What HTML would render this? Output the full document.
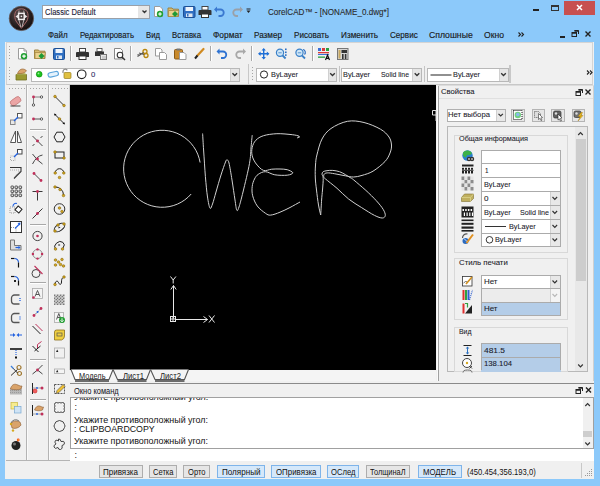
<!DOCTYPE html><html><head><meta charset="utf-8"><style>html,body{margin:0;padding:0;width:600px;height:486px;overflow:hidden}body>*{position:absolute}</style></head><body><div style="left:0px;top:0px;width:600px;height:486px;background:#8cc9fa"></div><div style="left:42px;top:5px;width:108px;height:14px;background:#fff;border:1px solid #9aa0a8;box-sizing:border-box"></div><div style="left:138px;top:6px;width:11px;height:12px;background:#e6e6e6"></div><div style="left:45px;top:7.87px;font-family:'Liberation Sans',sans-serif;font-size:8.4px;line-height:9.66px;color:#1d1d3a;white-space:pre;transform:scaleX(0.9041);transform-origin:0 0;-webkit-text-stroke:0.12px #1d1d3a;">Classic Default</div><div style="left:267.5px;top:7.46px;font-family:'Liberation Sans',sans-serif;font-size:8.8px;line-height:10.12px;color:#2a2a2a;white-space:pre;transform:scaleX(0.9202);transform-origin:0 0;-webkit-text-stroke:0.1px #2a2a2a;">CorelCAD™ - [NONAME_0.dwg*]</div><div style="left:564px;top:1px;width:31px;height:14px;background:#c75050"></div><div style="left:533px;top:9px;width:6px;height:2px;background:#222"></div><div style="left:551px;top:5px;width:8px;height:6px;border:1px solid #333;border-top-width:2px;box-sizing:border-box"></div><div style="left:48px;top:31.07px;font-family:'Liberation Sans',sans-serif;font-size:8.5px;line-height:9.77px;color:#1a1a1a;white-space:pre;transform:scaleX(0.9375);transform-origin:0 0;-webkit-text-stroke:0.15px #1a1a1a;">Файл</div><div style="left:80px;top:31.07px;font-family:'Liberation Sans',sans-serif;font-size:8.5px;line-height:9.77px;color:#1a1a1a;white-space:pre;transform:scaleX(0.9196);transform-origin:0 0;-webkit-text-stroke:0.15px #1a1a1a;">Редактировать</div><div style="left:146px;top:31.07px;font-family:'Liberation Sans',sans-serif;font-size:8.5px;line-height:9.77px;color:#1a1a1a;white-space:pre;transform:scaleX(0.9096);transform-origin:0 0;-webkit-text-stroke:0.15px #1a1a1a;">Вид</div><div style="left:172px;top:31.07px;font-family:'Liberation Sans',sans-serif;font-size:8.5px;line-height:9.77px;color:#1a1a1a;white-space:pre;transform:scaleX(0.9179);transform-origin:0 0;-webkit-text-stroke:0.15px #1a1a1a;">Вставка</div><div style="left:213px;top:31.07px;font-family:'Liberation Sans',sans-serif;font-size:8.5px;line-height:9.77px;color:#1a1a1a;white-space:pre;transform:scaleX(0.9833);transform-origin:0 0;-webkit-text-stroke:0.15px #1a1a1a;">Формат</div><div style="left:254px;top:31.07px;font-family:'Liberation Sans',sans-serif;font-size:8.5px;line-height:9.77px;color:#1a1a1a;white-space:pre;transform:scaleX(0.9583);transform-origin:0 0;-webkit-text-stroke:0.15px #1a1a1a;">Размер</div><div style="left:294px;top:31.07px;font-family:'Liberation Sans',sans-serif;font-size:8.5px;line-height:9.77px;color:#1a1a1a;white-space:pre;transform:scaleX(0.9516);transform-origin:0 0;-webkit-text-stroke:0.15px #1a1a1a;">Рисовать</div><div style="left:341px;top:31.07px;font-family:'Liberation Sans',sans-serif;font-size:8.5px;line-height:9.77px;color:#1a1a1a;white-space:pre;transform:scaleX(0.9650);transform-origin:0 0;-webkit-text-stroke:0.15px #1a1a1a;">Изменить</div><div style="left:390px;top:31.07px;font-family:'Liberation Sans',sans-serif;font-size:8.5px;line-height:9.77px;color:#1a1a1a;white-space:pre;transform:scaleX(0.9516);transform-origin:0 0;-webkit-text-stroke:0.15px #1a1a1a;">Сервис</div><div style="left:429px;top:31.07px;font-family:'Liberation Sans',sans-serif;font-size:8.5px;line-height:9.77px;color:#1a1a1a;white-space:pre;transform:scaleX(1.0192);transform-origin:0 0;-webkit-text-stroke:0.15px #1a1a1a;">Сплошные</div><div style="left:484px;top:31.07px;font-family:'Liberation Sans',sans-serif;font-size:8.5px;line-height:9.77px;color:#1a1a1a;white-space:pre;transform:scaleX(1.0119);transform-origin:0 0;-webkit-text-stroke:0.15px #1a1a1a;">Окно</div><div style="left:560px;top:36px;width:5px;height:2px;background:#222"></div><div style="left:5px;top:42px;width:589px;height:437px;background:#f0f0f0"></div><div style="left:6px;top:42px;width:587px;height:22px;background:#f0f0f0;border:1px solid #d4d4d4;border-bottom-color:#c8c8c8;box-sizing:border-box"></div><div style="left:6px;top:63px;width:587px;height:22px;background:#f0f0f0;border:1px solid #d4d4d4;border-top:none;border-bottom-color:#c8c8c8;box-sizing:border-box"></div><div style="left:248px;top:64px;width:1px;height:20px;background:#c8c8c8"></div><div style="left:509px;top:65px;width:2px;height:18px;background:#c8c8c8"></div><div style="left:338.5px;top:66px;width:1px;height:16px;background:#c4c4c4"></div><div style="left:424px;top:66px;width:1px;height:16px;background:#c4c4c4"></div><div style="left:31px;top:67.5px;width:209px;height:14.0px;background:#fff;border:1px solid #b8b8b8;box-sizing:border-box"></div><div style="left:229.5px;top:68.5px;width:9.5px;height:12.0px;background:#e6e6e6;border-left:1px solid #d0d0d0;box-sizing:border-box"></div><div style="left:256px;top:67.5px;width:81px;height:14.0px;background:#fff;border:1px solid #b8b8b8;box-sizing:border-box"></div><div style="left:328px;top:68.5px;width:8px;height:12.0px;background:#e6e6e6;border-left:1px solid #d0d0d0;box-sizing:border-box"></div><div style="left:341px;top:67.5px;width:81px;height:14.0px;background:#fff;border:1px solid #b8b8b8;box-sizing:border-box"></div><div style="left:412px;top:68.5px;width:9px;height:12.0px;background:#e6e6e6;border-left:1px solid #d0d0d0;box-sizing:border-box"></div><div style="left:427px;top:67.5px;width:81.5px;height:14.0px;background:#fff;border:1px solid #b8b8b8;box-sizing:border-box"></div><div style="left:498.5px;top:68.5px;width:9.0px;height:12.0px;background:#e6e6e6;border-left:1px solid #d0d0d0;box-sizing:border-box"></div><div style="left:91.3px;top:70.79px;font-family:'Liberation Sans',sans-serif;font-size:7.8px;line-height:8.97px;color:#2a2a60;white-space:pre;transform:scaleX(0.9899);transform-origin:0 0;-webkit-text-stroke:0.08px #2a2a60;">0</div><div style="left:271px;top:70.99px;font-family:'Liberation Sans',sans-serif;font-size:7.8px;line-height:8.97px;color:#1a1a2a;white-space:pre;transform:scaleX(0.9437);transform-origin:0 0;-webkit-text-stroke:0.08px #1a1a2a;">ByLayer</div><div style="left:343px;top:70.99px;font-family:'Liberation Sans',sans-serif;font-size:7.8px;line-height:8.97px;color:#1a1a2a;white-space:pre;transform:scaleX(0.9437);transform-origin:0 0;-webkit-text-stroke:0.08px #1a1a2a;">ByLayer</div><div style="left:381px;top:70.99px;font-family:'Liberation Sans',sans-serif;font-size:7.8px;line-height:8.97px;color:#1a1a2a;white-space:pre;transform:scaleX(0.8849);transform-origin:0 0;-webkit-text-stroke:0.08px #1a1a2a;">Solid line</div><div style="left:453px;top:70.99px;font-family:'Liberation Sans',sans-serif;font-size:7.8px;line-height:8.97px;color:#1a1a2a;white-space:pre;transform:scaleX(0.9437);transform-origin:0 0;-webkit-text-stroke:0.08px #1a1a2a;">ByLayer</div><div style="left:70px;top:85px;width:366px;height:285.5px;background:#000"></div><div style="left:436px;top:85px;width:3px;height:299px;background:#f0f0f0"></div><div style="left:438px;top:86px;width:156px;height:297px;border-left:1px solid #9a9a9a;box-sizing:border-box;background:#f0f0f0"></div><div style="left:438px;top:86px;width:156px;height:12px;background:#f0f0f0"></div><div style="left:440.5px;top:88.49px;font-family:'Liberation Sans',sans-serif;font-size:7.8px;line-height:8.97px;color:#1a1a2a;white-space:pre;transform:scaleX(0.9781);transform-origin:0 0;-webkit-text-stroke:0.08px #1a1a2a;">Свойства</div><div style="left:438px;top:98px;width:156px;height:1px;background:#e0e0e0"></div><div style="left:438px;top:85px;width:156px;height:1px;background:#dcdcdc"></div><div style="left:437px;top:86px;width:1px;height:296px;background:#fbfbfb"></div><div style="left:438px;top:86px;width:1px;height:296px;background:#a0a0a0"></div><div style="left:592.5px;top:86px;width:1px;height:296px;background:#d0d0d0"></div><div style="left:446.5px;top:108.5px;width:59.5px;height:13px;background:#fff;border:1px solid #b0b0b0;box-sizing:border-box"></div><div style="left:496px;top:109.5px;width:9px;height:11px;background:#e8e8e8;border-left:1px solid #d0d0d0;box-sizing:border-box"></div><div style="left:448px;top:111.49px;font-family:'Liberation Sans',sans-serif;font-size:7.8px;line-height:8.97px;color:#1a1a2a;white-space:pre;transform:scaleX(0.9819);transform-origin:0 0;-webkit-text-stroke:0.08px #1a1a2a;">Нет выбора</div><div style="left:511px;top:108.5px;width:13.5px;height:13px;background:#e6e6e6;border:1px solid #b4b4b4;box-sizing:border-box"></div><div style="left:531.5px;top:108.5px;width:13.5px;height:13px;background:#e6e6e6;border:1px solid #b4b4b4;box-sizing:border-box"></div><div style="left:551px;top:108.5px;width:13.5px;height:13px;background:#e6e6e6;border:1px solid #b4b4b4;box-sizing:border-box"></div><div style="left:571.5px;top:108.5px;width:13.5px;height:13px;background:#e6e6e6;border:1px solid #b4b4b4;box-sizing:border-box"></div><div style="left:446.5px;top:126px;width:141px;height:246px;background:#f0f0f0;border:1px solid #b8b8b8;box-sizing:border-box"></div><div style="left:575px;top:127px;width:11.5px;height:244px;background:#e8e8e8"></div><div style="left:576px;top:139px;width:10px;height:142px;background:#cdcdcd"></div><div style="left:453.5px;top:134.5px;width:114.5px;height:118.5px;border:1px solid #d8d8d8;box-sizing:border-box"></div><div style="left:459px;top:135.19px;font-family:'Liberation Sans',sans-serif;font-size:7.8px;line-height:8.97px;color:#1a1a2a;white-space:pre;transform:scaleX(0.9303);transform-origin:0 0;-webkit-text-stroke:0.08px #1a1a2a;">Общая информация</div><div style="left:453.5px;top:258px;width:114.5px;height:61.5px;border:1px solid #d8d8d8;box-sizing:border-box"></div><div style="left:459px;top:259.49px;font-family:'Liberation Sans',sans-serif;font-size:7.8px;line-height:8.97px;color:#1a1a2a;white-space:pre;-webkit-text-stroke:0.08px #1a1a2a;">Стиль печати</div><div style="left:453.5px;top:326.5px;width:114.5px;height:45.5px;border:1px solid #d8d8d8;box-sizing:border-box"></div><div style="left:459px;top:328.19px;font-family:'Liberation Sans',sans-serif;font-size:7.8px;line-height:8.97px;color:#1a1a2a;white-space:pre;transform:scaleX(0.8859);transform-origin:0 0;-webkit-text-stroke:0.08px #1a1a2a;">Вид</div><div style="left:481px;top:149.5px;width:80px;height:14.5px;background:#fff;border:1px solid #ababab;box-sizing:border-box"></div><div style="left:481px;top:163px;width:80px;height:14.5px;background:#fff;border:1px solid #ababab;box-sizing:border-box"></div><div style="left:485px;top:166.79px;font-family:'Liberation Sans',sans-serif;font-size:7.8px;line-height:8.97px;color:#1a1a2a;white-space:pre;transform:scaleX(0.8058);transform-origin:0 0;-webkit-text-stroke:0.08px #1a1a2a;">1</div><div style="left:481px;top:177px;width:80px;height:14.5px;background:#fff;border:1px solid #ababab;box-sizing:border-box"></div><div style="left:483.75px;top:180.79px;font-family:'Liberation Sans',sans-serif;font-size:7.8px;line-height:8.97px;color:#1a1a2a;white-space:pre;transform:scaleX(0.9350);transform-origin:0 0;-webkit-text-stroke:0.08px #1a1a2a;">ByLayer</div><div style="left:481px;top:191px;width:80px;height:14.5px;background:#fff;border:1px solid #ababab;box-sizing:border-box"></div><div style="left:549.5px;top:192px;width:10.5px;height:12.5px;background:#e8e8e8;border-left:1px solid #d0d0d0;box-sizing:border-box"></div><div style="left:483.5px;top:194.79px;font-family:'Liberation Sans',sans-serif;font-size:7.8px;line-height:8.97px;color:#1a1a2a;white-space:pre;transform:scaleX(1.0360);transform-origin:0 0;-webkit-text-stroke:0.08px #1a1a2a;">0</div><div style="left:481px;top:205px;width:80px;height:14.5px;background:#fff;border:1px solid #ababab;box-sizing:border-box"></div><div style="left:549.5px;top:206px;width:10.5px;height:12.5px;background:#e8e8e8;border-left:1px solid #d0d0d0;box-sizing:border-box"></div><div style="left:483.75px;top:208.79px;font-family:'Liberation Sans',sans-serif;font-size:7.8px;line-height:8.97px;color:#1a1a2a;white-space:pre;transform:scaleX(0.9350);transform-origin:0 0;-webkit-text-stroke:0.08px #1a1a2a;">ByLayer</div><div style="left:519.5px;top:208.79px;font-family:'Liberation Sans',sans-serif;font-size:7.8px;line-height:8.97px;color:#1a1a2a;white-space:pre;transform:scaleX(0.9165);transform-origin:0 0;-webkit-text-stroke:0.08px #1a1a2a;">Solid line</div><div style="left:481px;top:219px;width:80px;height:14.5px;background:#fff;border:1px solid #ababab;box-sizing:border-box"></div><div style="left:549.5px;top:220px;width:10.5px;height:12.5px;background:#e8e8e8;border-left:1px solid #d0d0d0;box-sizing:border-box"></div><div style="left:508.5px;top:222.79px;font-family:'Liberation Sans',sans-serif;font-size:7.8px;line-height:8.97px;color:#1a1a2a;white-space:pre;transform:scaleX(0.9350);transform-origin:0 0;-webkit-text-stroke:0.08px #1a1a2a;">ByLayer</div><div style="left:481px;top:232.5px;width:80px;height:14.5px;background:#fff;border:1px solid #ababab;box-sizing:border-box"></div><div style="left:549.5px;top:233.5px;width:10.5px;height:12.5px;background:#e8e8e8;border-left:1px solid #d0d0d0;box-sizing:border-box"></div><div style="left:495px;top:236.29px;font-family:'Liberation Sans',sans-serif;font-size:7.8px;line-height:8.97px;color:#1a1a2a;white-space:pre;transform:scaleX(0.9350);transform-origin:0 0;-webkit-text-stroke:0.08px #1a1a2a;">ByLayer</div><div style="left:481px;top:274.5px;width:80px;height:14.5px;background:#fff;border:1px solid #ababab;box-sizing:border-box"></div><div style="left:549.5px;top:275.5px;width:10.5px;height:12.5px;background:#e8e8e8;border-left:1px solid #d0d0d0;box-sizing:border-box"></div><div style="left:483.5px;top:278.29px;font-family:'Liberation Sans',sans-serif;font-size:7.8px;line-height:8.97px;color:#1a1a2a;white-space:pre;transform:scaleX(1.0165);transform-origin:0 0;-webkit-text-stroke:0.08px #1a1a2a;">Нет</div><div style="left:481px;top:288px;width:80px;height:14.5px;background:#ececec;border:1px solid #ababab;box-sizing:border-box"></div><div style="left:549.5px;top:289px;width:10.5px;height:12.5px;background:#f4f4f4;border-left:1px solid #d0d0d0;box-sizing:border-box"></div><div style="left:481px;top:301.5px;width:80px;height:14.5px;background:#b4cde8;border:1px solid #ababab;box-sizing:border-box"></div><div style="left:483.5px;top:305.29px;font-family:'Liberation Sans',sans-serif;font-size:7.8px;line-height:8.97px;color:#1a1a2a;white-space:pre;transform:scaleX(1.0165);transform-origin:0 0;-webkit-text-stroke:0.08px #1a1a2a;">Нет</div><div style="left:481px;top:343px;width:80px;height:14.5px;background:#b4cde8;border:1px solid #ababab;box-sizing:border-box"></div><div style="left:484px;top:346.79px;font-family:'Liberation Sans',sans-serif;font-size:7.8px;line-height:8.97px;color:#1a1a2a;white-space:pre;transform:scaleX(1.0761);transform-origin:0 0;-webkit-text-stroke:0.08px #1a1a2a;">481.5</div><div style="left:481px;top:356.5px;width:80px;height:14.5px;background:#b4cde8;border:1px solid #ababab;box-sizing:border-box"></div><div style="left:484px;top:360.29px;font-family:'Liberation Sans',sans-serif;font-size:7.8px;line-height:8.97px;color:#1a1a2a;white-space:pre;transform:scaleX(0.9933);transform-origin:0 0;-webkit-text-stroke:0.08px #1a1a2a;">138.104</div><div style="left:481px;top:370px;width:80px;height:2px;background:#b4cde8"></div><div style="left:438px;top:382px;width:156px;height:1.5px;background:#9a9a9a"></div><div style="left:70px;top:369.5px;width:366px;height:11px;background:#f4f4f4"></div><div style="left:70px;top:380.5px;width:366px;height:1px;background:#7a7a7a"></div><div style="left:70px;top:381px;width:524px;height:2px;background:#f0f0f0"></div><svg style="left:0;top:0" width="600" height="486"><path d="M71 369.5 L75 379.5 H109 L113 369.5" fill="#fff" stroke="#555" stroke-width="1.1"/><path d="M113 369.5 L117.5 379.5 H146.5 L150.5 369.5" fill="#f4f4f4" stroke="#555" stroke-width="1.1"/><path d="M150.5 369.5 L155 379.5 H184.5 L188.5 369.5" fill="#f4f4f4" stroke="#555" stroke-width="1.1"/></svg><div style="left:78.5px;top:371.86px;font-family:'Liberation Sans',sans-serif;font-size:8.2px;line-height:9.43px;color:#222;white-space:pre;transform:scaleX(0.9016);transform-origin:0 0;">Модель</div><div style="left:122.5px;top:371.86px;font-family:'Liberation Sans',sans-serif;font-size:8.2px;line-height:9.43px;color:#222;white-space:pre;transform:scaleX(0.9399);transform-origin:0 0;">Лист1</div><div style="left:160px;top:371.86px;font-family:'Liberation Sans',sans-serif;font-size:8.2px;line-height:9.43px;color:#222;white-space:pre;transform:scaleX(0.9399);transform-origin:0 0;">Лист2</div><div style="left:70px;top:382.5px;width:524px;height:1px;background:#8a8a8a"></div><div style="left:70px;top:383.5px;width:524px;height:13px;background:#f0f0f0"></div><div style="left:70px;top:396.5px;width:524px;height:1px;background:#a0a0a0"></div><div style="left:73.5px;top:387.26px;font-family:'Liberation Sans',sans-serif;font-size:8.2px;line-height:9.43px;color:#1a1a2a;white-space:pre;transform:scaleX(0.9120);transform-origin:0 0;-webkit-text-stroke:0.05px #111;">Окно команд</div><div style="left:70px;top:397.5px;width:524px;height:51px;background:#fff;border-left:1px solid #a0a0a0;border-right:1px solid #a0a0a0;border-bottom:1px solid #a0a0a0;box-sizing:border-box;overflow:hidden"></div><div style="left:71px;top:397.5px;width:510px;height:50px;overflow:hidden"><div style="position:absolute;left:3px;top:-6px;font-family:'Liberation Sans',sans-serif;font-size:9px;line-height:10px;color:#111;white-space:pre;transform:scaleX(0.99);transform-origin:0 0">Укажите противоположный угол:</div></div><div style="left:74.5px;top:401.76px;font-family:'Liberation Sans',sans-serif;font-size:9px;line-height:10.35px;color:#111;white-space:pre;">:</div><div style="left:74px;top:414.56px;font-family:'Liberation Sans',sans-serif;font-size:9px;line-height:10.35px;color:#111;white-space:pre;transform:scaleX(0.9880);transform-origin:0 0;">Укажите противоположный угол:</div><div style="left:74px;top:424.36px;font-family:'Liberation Sans',sans-serif;font-size:9px;line-height:10.35px;color:#111;white-space:pre;transform:scaleX(0.9778);transform-origin:0 0;">: CLIPBOARDCOPY</div><div style="left:74px;top:435.86px;font-family:'Liberation Sans',sans-serif;font-size:9px;line-height:10.35px;color:#111;white-space:pre;transform:scaleX(0.9880);transform-origin:0 0;">Укажите противоположный угол:</div><div style="left:582.5px;top:398px;width:10px;height:50px;background:#f0f0f0"></div><div style="left:583px;top:431px;width:9px;height:6px;background:#cdcdcd"></div><div style="left:70px;top:448.5px;width:524px;height:12.5px;background:#fff"></div><div style="left:74.5px;top:449.56px;font-family:'Liberation Sans',sans-serif;font-size:9px;line-height:10.35px;color:#111;white-space:pre;">:</div><div style="left:5px;top:461px;width:589px;height:18px;background:#f0f0f0"></div><div style="left:99px;top:465px;width:43.599999999999994px;height:13px;background:#e6e6e6;border:1px solid #adadad;box-sizing:border-box"></div><div style="left:103.3px;top:467.56px;font-family:'Liberation Sans',sans-serif;font-size:8.3px;line-height:9.54px;color:#111;white-space:pre;transform:scaleX(0.9651);transform-origin:0 0;">Привязка</div><div style="left:148.6px;top:465px;width:28.400000000000006px;height:13px;background:#e6e6e6;border:1px solid #adadad;box-sizing:border-box"></div><div style="left:152.55px;top:467.56px;font-family:'Liberation Sans',sans-serif;font-size:8.3px;line-height:9.54px;color:#111;white-space:pre;transform:scaleX(0.9086);transform-origin:0 0;">Сетка</div><div style="left:183px;top:465px;width:27px;height:13px;background:#e6e6e6;border:1px solid #adadad;box-sizing:border-box"></div><div style="left:187.75px;top:467.56px;font-family:'Liberation Sans',sans-serif;font-size:8.3px;line-height:9.54px;color:#111;white-space:pre;transform:scaleX(0.9106);transform-origin:0 0;">Орто</div><div style="left:216.7px;top:465px;width:48.30000000000001px;height:13px;background:#d5e8fa;border:1px solid #7eb4ea;box-sizing:border-box"></div><div style="left:221.6px;top:467.56px;font-family:'Liberation Sans',sans-serif;font-size:8.3px;line-height:9.54px;color:#111;white-space:pre;transform:scaleX(0.9739);transform-origin:0 0;">Полярный</div><div style="left:271px;top:465px;width:49.69999999999999px;height:13px;background:#d5e8fa;border:1px solid #7eb4ea;box-sizing:border-box"></div><div style="left:275.6px;top:467.56px;font-family:'Liberation Sans',sans-serif;font-size:8.3px;line-height:9.54px;color:#111;white-space:pre;transform:scaleX(0.9481);transform-origin:0 0;">ОПривязка</div><div style="left:326.7px;top:465px;width:32.60000000000002px;height:13px;background:#d5e8fa;border:1px solid #7eb4ea;box-sizing:border-box"></div><div style="left:330.75px;top:467.56px;font-family:'Liberation Sans',sans-serif;font-size:8.3px;line-height:9.54px;color:#111;white-space:pre;transform:scaleX(0.9224);transform-origin:0 0;">ОСлед</div><div style="left:365.8px;top:465px;width:44.599999999999966px;height:13px;background:#e6e6e6;border:1px solid #adadad;box-sizing:border-box"></div><div style="left:370.35px;top:467.56px;font-family:'Liberation Sans',sans-serif;font-size:8.3px;line-height:9.54px;color:#111;white-space:pre;transform:scaleX(0.8920);transform-origin:0 0;">ТолщинаЛ</div><div style="left:418px;top:465px;width:43.69999999999999px;height:13px;background:#d5e8fa;border:1px solid #7eb4ea;box-sizing:border-box"></div><div style="left:423.35px;top:467.56px;font-family:'Liberation Sans',sans-serif;font-size:8.3px;line-height:9.54px;color:#111;white-space:pre;transform:scaleX(0.9366);transform-origin:0 0;">МОДЕЛЬ</div><div style="left:466.7px;top:467.56px;font-family:'Liberation Sans',sans-serif;font-size:8.3px;line-height:9.54px;color:#111;white-space:pre;transform:scaleX(0.9193);transform-origin:0 0;">(450.454,356.193,0)</div><div style="left:581px;top:463px;width:1px;height:15px;background:#c8c8c8"></div><svg style="left:0;top:0" width="600" height="486" viewBox="0 0 600 486"><defs><radialGradient id="lg" cx="40%" cy="35%" r="65%"><stop offset="0" stop-color="#5a4c4c"/><stop offset="0.6" stop-color="#2c2424"/><stop offset="1" stop-color="#161010"/></radialGradient></defs><circle cx="21.4" cy="18.4" r="12.2" fill="url(#lg)" stroke="#6a5c5c" stroke-width="0.8"/><path d="M21.4 8.8 C13.8 8.8 13.8 17 16 21 L21.4 28.3 L26.8 21 C29 17 29 8.8 21.4 8.8Z" fill="none" stroke="#a86a6a" stroke-width="1"/><path d="M19 10.5 Q17.5 19 20.8 27 M23.8 10.5 Q25.3 19 22 27" fill="none" stroke="#c8c0c0" stroke-width="0.9"/><path d="M15.5 16.5 L17.5 15 H25.3 L27.3 16.5 L25.3 18 H17.5Z" fill="#e8e4e4"/><rect x="18.6" y="13.4" width="5.6" height="6" fill="#3a3030" stroke="#f0ecec" stroke-width="1.5"/><rect x="20.6" y="15.6" width="1.6" height="1.6" fill="#f0ecec"/><path d="M154.5 6.5h5.5l2.5 2.5v7.5h-8z" fill="#fff" stroke="#9c9c9c"/><circle cx="160" cy="14" r="3.2" fill="#22a033"/><path d="M158.2 14h3.6M160 12.2v3.6" stroke="#fff" stroke-width="1.2"/><path d="M168 8h4l1 1.2h5.5v7.3h-10.5z" fill="#d8bb6e" stroke="#9d8240"/><path d="M168.5 10.5h10.5l-1.5 6h-9z" fill="#e9d18e" stroke="#a88a45" stroke-width="0.8"/><path d="M175 11l3 3-3 3-3-3z" fill="#1f9a35"/><rect x="183.5" y="6.5" width="11.5" height="11" rx="1" fill="#2f6fc2" stroke="#1d4f94"/><rect x="185.5" y="7" width="7.5" height="4" fill="#eef4fb"/><rect x="186" y="13.5" width="6.5" height="3.5" fill="#dde6f0"/><rect x="187" y="14" width="1.5" height="2.5" fill="#2f6fc2"/><rect x="202" y="6.5" width="6" height="3.5" fill="#fff" stroke="#444"/><path d="M199.5 10h11a1 1 0 0 1 1 1v4h-13v-4a1 1 0 0 1 1-1z" fill="#333"/><rect x="201.5" y="14" width="7" height="3.5" fill="#fff" stroke="#333"/><path d="M216 9.5h4.5a3 3 0 0 1 0 6.5h-2" fill="none" stroke="#3a78d0" stroke-width="1.8"/><path d="M214 9.5l3-3v6z" fill="#3a78d0"/><path d="M241 9.5h-4.5a3 3 0 0 0 0 6.5h1.5" fill="none" stroke="#9aa0a8" stroke-width="1.8"/><path d="M243 9.5l-3-3v6z" fill="#9aa0a8"/><rect x="246.5" y="8.5" width="4" height="1" fill="#222"/><path d="M246.5 10.5h4l-2 2.5z" fill="#222"/><path d="M142.5 10.5 L144.5 12.5 L146.5 10.5" fill="none" stroke="#333" stroke-width="1.3"/><path d="M577 5 L582 10 M582 5 L577 10" stroke="#fff" stroke-width="1.5"/><path d="M518.5 32.5l2 2-2 2M521.5 32.5l2 2-2 2" fill="none" stroke="#222" stroke-width="1.1"/><path d="M574.5 30.5h4v3.5" fill="none" stroke="#222" stroke-width="1"/><rect x="572" y="32.5" width="4.5" height="4" fill="none" stroke="#222" stroke-width="1"/><path d="M572 33h4.5M574.5 31h4" stroke="#222" stroke-width="1.5"/><path d="M585.5 31.5 L590.5 36.5 M590.5 31.5 L585.5 36.5" stroke="#222" stroke-width="1.4"/><rect x="9" y="46" width="1" height="1" fill="#a4a4a4"/><rect x="9" y="49" width="1" height="1" fill="#a4a4a4"/><rect x="9" y="52" width="1" height="1" fill="#a4a4a4"/><rect x="9" y="55" width="1" height="1" fill="#a4a4a4"/><rect x="9" y="58" width="1" height="1" fill="#a4a4a4"/><rect x="9" y="67" width="1" height="1" fill="#a4a4a4"/><rect x="9" y="70" width="1" height="1" fill="#a4a4a4"/><rect x="9" y="73" width="1" height="1" fill="#a4a4a4"/><rect x="9" y="76" width="1" height="1" fill="#a4a4a4"/><rect x="9" y="79" width="1" height="1" fill="#a4a4a4"/><rect x="252" y="67" width="1" height="1" fill="#a4a4a4"/><rect x="252" y="70" width="1" height="1" fill="#a4a4a4"/><rect x="252" y="73" width="1" height="1" fill="#a4a4a4"/><rect x="252" y="76" width="1" height="1" fill="#a4a4a4"/><rect x="252" y="79" width="1" height="1" fill="#a4a4a4"/><rect x="70" y="46" width="1" height="15" fill="#a8a8a8"/><rect x="71" y="46" width="1" height="15" fill="#ffffff"/><rect x="130" y="46" width="1" height="15" fill="#a8a8a8"/><rect x="131" y="46" width="1" height="15" fill="#ffffff"/><rect x="210" y="46" width="1" height="15" fill="#a8a8a8"/><rect x="211" y="46" width="1" height="15" fill="#ffffff"/><rect x="251" y="46" width="1" height="15" fill="#a8a8a8"/><rect x="252" y="46" width="1" height="15" fill="#ffffff"/><rect x="312" y="46" width="1" height="15" fill="#a8a8a8"/><rect x="313" y="46" width="1" height="15" fill="#ffffff"/><path d="M18.5 48.5h5.5l2.5 2.5v8h-8z" fill="#fff" stroke="#9c9c9c"/><path d="M24 48.5v2.5h2.5" fill="none" stroke="#9c9c9c"/><circle cx="24" cy="56.2" r="3.2" fill="#22a033"/><path d="M22.2 56.2h3.6M24 54.4v3.6" stroke="#fff" stroke-width="1.2"/><path d="M34.5 50h4l1 1.2h5.5v7.3h-10.5z" fill="#d8bb6e" stroke="#9d8240"/><path d="M35 52.5h10.5l-1.5 6h-9z" fill="#e9d18e" stroke="#a88a45" stroke-width="0.8"/><path d="M41.5 53l3 3-3 3-3-3z" fill="#1f9a35"/><rect x="53.5" y="48.5" width="11" height="11" rx="1" fill="#2f6fc2" stroke="#1d4f94"/><rect x="55.5" y="49" width="7" height="4" fill="#eef4fb"/><rect x="56" y="55.5" width="6" height="3.5" fill="#dde6f0"/><rect x="57" y="56" width="1.5" height="2.5" fill="#2f6fc2"/><rect x="79.5" y="48.5" width="6" height="3.5" fill="#fff" stroke="#444"/><path d="M77 52h11a1 1 0 0 1 1 1v4h-13v-4a1 1 0 0 1 1-1z" fill="#333"/><rect x="79" y="56" width="7" height="3.5" fill="#fff" stroke="#333"/><rect x="97" y="48.5" width="5" height="3" fill="#fff" stroke="#444" stroke-width="0.8"/><path d="M95 51.5h9v4.5h-9z" fill="#333"/><rect x="100.5" y="54.5" width="6" height="5" fill="#e8e8e8" stroke="#777"/><rect x="102" y="56" width="4" height="3" fill="#ccc"/><path d="M114.5 48.5h6l2 2v8.5h-8z" fill="#fff" stroke="#888"/><circle cx="120" cy="55" r="2.8" fill="#fff" stroke="#333" stroke-width="1.1"/><path d="M122 57l3 3" stroke="#333" stroke-width="1.5"/><circle cx="145" cy="51.5" r="2" fill="none" stroke="#b8860b" stroke-width="1.3"/><circle cx="146" cy="55.5" r="2" fill="none" stroke="#b8860b" stroke-width="1.3"/><path d="M143.5 52.5L137.5 56.5M144 54.5L139 53" stroke="#555" stroke-width="1.1"/><path d="M137 55l3-1" stroke="#888" stroke-width="1"/><path d="M155.5 48.5h5l1.5 1.5v6h-6.5z" fill="#fff" stroke="#9a9a9a"/><path d="M159.5 52.5h5l2 2v5h-7z" fill="#fff" stroke="#9a9a9a"/><rect x="174.5" y="49.5" width="8" height="9.5" rx="1" fill="#c8892b" stroke="#8a5a18"/><rect x="176.5" y="48.5" width="4" height="2" fill="#777"/><path d="M179.5 52.5h4.5l2 2v5h-6.5z" fill="#fff" stroke="#999"/><path d="M203.5 49L197.5 55.5" stroke="#d08a20" stroke-width="2.2" stroke-linecap="round"/><path d="M197.5 55.5L195 58.5" stroke="#222" stroke-width="2"/><path d="M218.5 51.5h4.5a3 3 0 0 1 0 6.5h-2" fill="none" stroke="#2d72d2" stroke-width="1.8"/><path d="M216.5 51.5l3-3v6z" fill="#2d72d2"/><path d="M244 51.5h-4.5a3 3 0 0 0 0 6.5h1.5" fill="none" stroke="#a8a8a8" stroke-width="1.8"/><path d="M246 51.5l-3-3v6z" fill="#a8a8a8"/><path d="M263.7 49.2v9.2M259 53.8h9.4" stroke="#1f6fd6" stroke-width="1.4"/><path d="M263.7 48l-2.2 2.6h4.4zM263.7 59.6l-2.2-2.6h4.4zM258 53.8l2.6-2.2v4.4zM269.4 53.8l-2.6-2.2v4.4z" fill="#1f6fd6"/><circle cx="280" cy="52.8" r="3.6" fill="#cfe6f7" stroke="#3a80c8" stroke-width="1.2"/><path d="M282.6 55.5l3 3" stroke="#3a80c8" stroke-width="1.8"/><path d="M278.3 52.8h3.4" stroke="#3a80c8" stroke-width="0.8"/><rect x="285" y="48.5" width="1.6" height="1.6" fill="#2a6ec4"/><rect x="285" y="51.5" width="1.6" height="1.6" fill="#2a6ec4"/><rect x="285" y="54.3" width="1.6" height="1.6" fill="#2a6ec4"/><circle cx="299.5" cy="52.8" r="3.6" fill="#cfe6f7" stroke="#3a80c8" stroke-width="1.2"/><path d="M302 55.5l3 3" stroke="#3a80c8" stroke-width="1.8"/><path d="M297.8 52.8h3.4" stroke="#3a80c8" stroke-width="0.8"/><path d="M303 49.5a3 3 0 0 1 1.5 5" fill="none" stroke="#2a6ec4" stroke-width="1.2"/><rect x="318" y="48" width="3" height="3" fill="#3b6fd8"/><rect x="322" y="48" width="3" height="3" fill="#d83a3a"/><rect x="326" y="48" width="3" height="3" fill="#2aa040"/><rect x="318" y="52" width="11" height="1.3" fill="#d83a3a"/><rect x="318" y="54" width="11" height="1" fill="#3b6fd8"/><rect x="318" y="56.5" width="7" height="1.3" fill="#2aa040"/><path d="M325.5 60l2-5 2 5M326.3 58.4h2.4" fill="none" stroke="#111" stroke-width="1.2"/><rect x="337.5" y="48.5" width="10.5" height="11" fill="#d8d8d8" stroke="#777"/><rect x="338.5" y="50" width="2" height="8.5" fill="#c8a860"/><rect x="341.5" y="50" width="5.5" height="3" fill="#333"/><rect x="342" y="54" width="1.6" height="5" fill="#333"/><rect x="344.8" y="54" width="1.6" height="5" fill="#333"/><path d="M16 74.5h10.5v5.5h-10.5z" fill="#9a9a30" stroke="#6f6f20" stroke-width="0.8"/><path d="M16 74.5l2-1.5h7l1.5 1.5z" fill="#c6c66a"/><path d="M17.5 73.5c1-3 3-4.5 5-4.5s3.5 1 4 2c-1 1-3 2.5-5.5 2.5z" fill="#d9a36a" stroke="#9a6a3a" stroke-width="0.7"/><path d="M232.45 73.2l2.3 2.3 2.3-2.3" fill="none" stroke="#333" stroke-width="1.3"/><path d="M330.2 73.2l2.3 2.3 2.3-2.3" fill="none" stroke="#333" stroke-width="1.3"/><path d="M414.7 73.2l2.3 2.3 2.3-2.3" fill="none" stroke="#333" stroke-width="1.3"/><path d="M501.2 73.2l2.3 2.3 2.3-2.3" fill="none" stroke="#333" stroke-width="1.3"/><circle cx="39.2" cy="74.2" r="2.9" fill="#1ec31e" stroke="#0c8a0c" stroke-width="0.6"/><circle cx="38.5" cy="73.4" r="0.9" fill="#9ef09e"/><rect x="48" y="72" width="10.5" height="4.5" rx="2.2" transform="rotate(-12 53.3 74.3)" fill="#e4f2fc" stroke="#5aa4dc" stroke-width="1.1"/><path d="M63 73v-1.8a2.3 2.3 0 0 1 4.3-.8" fill="none" stroke="#8a8a8a" stroke-width="1.2"/><rect x="64" y="72.5" width="7" height="6" rx="1" fill="#e0c040" stroke="#9a8020" stroke-width="0.7"/><circle cx="81.7" cy="74.3" r="4.3" fill="#fff" stroke="#222" stroke-width="1.1"/><circle cx="264" cy="74.5" r="3.6" fill="#fff" stroke="#222" stroke-width="1"/><rect x="430.5" y="74.5" width="21" height="1" fill="#222"/><path d="M587 70.5l2 2-2 2M590 70.5l2 2-2 2" fill="none" stroke="#222" stroke-width="1.1"/><rect x="26" y="85" width="1" height="375" fill="#b4b4b4"/><rect x="27" y="85" width="1" height="375" fill="#fafafa"/><rect x="48" y="85" width="1" height="375" fill="#b4b4b4"/><rect x="49" y="85" width="1" height="375" fill="#fafafa"/><rect x="6" y="460" width="64" height="1" fill="#b4b4b4"/><rect x="69" y="85" width="1" height="285" fill="#d0d0d0"/><rect x="9" y="88" width="1" height="1" fill="#a4a4a4"/><rect x="12" y="88" width="1" height="1" fill="#a4a4a4"/><rect x="15" y="88" width="1" height="1" fill="#a4a4a4"/><rect x="18" y="88" width="1" height="1" fill="#a4a4a4"/><rect x="21" y="88" width="1" height="1" fill="#a4a4a4"/><rect x="24" y="88" width="1" height="1" fill="#a4a4a4"/><rect x="30" y="88" width="1" height="1" fill="#a4a4a4"/><rect x="33" y="88" width="1" height="1" fill="#a4a4a4"/><rect x="36" y="88" width="1" height="1" fill="#a4a4a4"/><rect x="39" y="88" width="1" height="1" fill="#a4a4a4"/><rect x="42" y="88" width="1" height="1" fill="#a4a4a4"/><rect x="45" y="88" width="1" height="1" fill="#a4a4a4"/><rect x="52" y="88" width="1" height="1" fill="#a4a4a4"/><rect x="55" y="88" width="1" height="1" fill="#a4a4a4"/><rect x="58" y="88" width="1" height="1" fill="#a4a4a4"/><rect x="61" y="88" width="1" height="1" fill="#a4a4a4"/><rect x="64" y="88" width="1" height="1" fill="#a4a4a4"/><rect x="67" y="88" width="1" height="1" fill="#a4a4a4"/><g transform="translate(16 101)"><rect x="-6" y="-3" width="11" height="6" rx="2.5" transform="rotate(-35)" fill="#eba5a5" stroke="#c07070" stroke-width="0.7"/><path d="M-5.5 5h10" stroke="#444" stroke-width="1"/></g><g transform="translate(16 119)"><rect x="1.5" y="-5.5" width="4.5" height="4.5" fill="#fff" stroke="#555"/><rect x="-5.5" y="1" width="4.5" height="4.5" fill="#e8e8e8" stroke="#888"/><path d="M-2 2l4-4" stroke="#2060e0" stroke-width="1.2"/></g><g transform="translate(16 137)"><path d="M-0.5 -6v11.5h-5z" fill="#fff" stroke="#444" stroke-width="0.9"/><path d="M1.5 -6l4 11.5h-4z" fill="#fff" stroke="#444" stroke-width="0.9"/></g><g transform="translate(16 155)"><rect x="1.5" y="-5.5" width="4.5" height="4.5" fill="#fff" stroke="#444"/><rect x="-5.5" y="1" width="4.5" height="4.5" fill="none" stroke="#aaa" stroke-dasharray="1 1"/><path d="M-2 2l4-4" stroke="#2060e0" stroke-width="1.2"/></g><g transform="translate(16 173)"><path d="M-6 -5.5h11v4l-7 7" fill="none" stroke="#333" stroke-width="1.1"/><path d="M-6 -3h9v2l-5 5" fill="none" stroke="#999" stroke-width="0.8" stroke-dasharray="1 1"/></g><g transform="translate(16 191)"><rect x="-5" y="-5" width="2.6" height="2.6" rx="0.6" fill="#ddd" stroke="#444" stroke-width="0.9"/><rect x="-5" y="-1" width="2.6" height="2.6" rx="0.6" fill="#ddd" stroke="#444" stroke-width="0.9"/><rect x="-5" y="3" width="2.6" height="2.6" rx="0.6" fill="#ddd" stroke="#444" stroke-width="0.9"/><rect x="-1" y="-5" width="2.6" height="2.6" rx="0.6" fill="#ddd" stroke="#444" stroke-width="0.9"/><rect x="-1" y="-1" width="2.6" height="2.6" rx="0.6" fill="#ddd" stroke="#444" stroke-width="0.9"/><rect x="-1" y="3" width="2.6" height="2.6" rx="0.6" fill="#ddd" stroke="#444" stroke-width="0.9"/><rect x="3" y="-5" width="2.6" height="2.6" rx="0.6" fill="#ddd" stroke="#444" stroke-width="0.9"/><rect x="3" y="-1" width="2.6" height="2.6" rx="0.6" fill="#ddd" stroke="#444" stroke-width="0.9"/><rect x="3" y="3" width="2.6" height="2.6" rx="0.6" fill="#ddd" stroke="#444" stroke-width="0.9"/></g><g transform="translate(16 209)"><rect x="-6" y="-2" width="5" height="6" fill="none" stroke="#999" stroke-dasharray="1 1"/><rect x="0" y="-2" width="5" height="5" transform="rotate(40 2.5 0.5)" fill="#fff" stroke="#222"/><path d="M-3 -2.5a3 3 0 0 1 4-3" fill="none" stroke="#2060e0" stroke-width="1.1"/></g><g transform="translate(16 227)"><rect x="-5.5" y="-5.5" width="11" height="11" fill="#fff" stroke="#333"/><path d="M-5 0.5h5v5" fill="none" stroke="#999" stroke-dasharray="1 1"/><path d="M-1 1.5l5-5" stroke="#2060e0" stroke-width="1.1"/><path d="M4.5 -4.5l-3 .5 2.5 2.5z" fill="#2060e0"/></g><g transform="translate(16 245)"><path d="M-5.5 -5h4v5.5h6.5v4.5h-10.5z" fill="#ddd" stroke="#777"/><path d="M-0.5 2.5h4" stroke="#2060e0" stroke-width="1.2"/><path d="M4.5 2.5l-2-1.8v3.6z" fill="#2060e0"/></g><g transform="translate(16 263)"><path d="M-5 -4.5h3.5" stroke="#111" stroke-width="1.2"/><path d="M-1.5 -4.5a4 4 0 0 1 4 4" fill="none" stroke="#2060e0" stroke-width="1.2"/><path d="M2.5 -0.5v5" stroke="#111" stroke-width="1.2"/></g><g transform="translate(16 281)"><path d="M-5 -4.5h3.5" stroke="#111" stroke-width="1.2"/><path d="M-1.5 -4.5a4 4 0 0 1 4 4" fill="none" stroke="#2060e0" stroke-width="1.2"/><path d="M2.5 -0.5v5" stroke="#111" stroke-width="1.2"/><rect x="-2" y="-1" width="2" height="2" fill="#222"/></g><g transform="translate(16 299.5)"><path d="M3.5 -4.5h-5a3 3 0 0 0 -3 3v3a3 3 0 0 0 3 3h5" fill="none" stroke="#555" stroke-width="1.3"/><path d="M4 -1.5v3" stroke="#2060e0" stroke-width="1.3" stroke-dasharray="1 1"/></g><g transform="translate(16 318)"><path d="M3.5 -4.5h-5a3 3 0 0 0 -3 3v3a3 3 0 0 0 3 3h5" fill="none" stroke="#555" stroke-width="1.3"/><path d="M4 -1.5v3" stroke="#2060e0" stroke-width="1.3" stroke-dasharray="1 1"/></g><g transform="translate(16 335)"><path d="M-6 0h4M2 0h4" stroke="#2060e0" stroke-width="1.2"/><path d="M-0.5 0l-2.5-2v4zM0.5 0l2.5-2v4z" fill="#2060e0"/></g><g transform="translate(16 353)"><path d="M-6 -4h12" stroke="#111" stroke-width="1.6"/><path d="M0 -3v6" stroke="#2060e0" stroke-width="1.1" stroke-dasharray="1 1"/><rect x="-1" y="3.5" width="2" height="2" fill="#111"/></g><g transform="translate(16 371)"><circle cx="3" cy="-3.5" r="2" fill="none" stroke="#a07830" stroke-width="1.2"/><circle cx="3.5" cy="2.5" r="2" fill="none" stroke="#a07830" stroke-width="1.2"/><path d="M-5 -5l6.5 7M-5 4.5l6.5-6" stroke="#333" stroke-width="1"/><path d="M-5 -5l2.5 2.7" stroke="#3a80e0" stroke-width="1.2"/></g><g transform="translate(16 389.5)"><rect x="-6" y="-1" width="12" height="6" fill="#b8b8b8"/><path d="M-6 1h12M-6 3h12" stroke="#888" stroke-width="0.6" stroke-dasharray="1 1"/><path d="M-5.5 -1c1-3 3-5 6-4s4 2 5.5 1.5l-1 3c-3 1-6 1-10.5 0z" fill="#d9a36a" stroke="#8a5a30" stroke-width="0.6"/></g><g transform="translate(16 408)"><rect x="-5" y="-5.5" width="6.5" height="6.5" fill="#f6ec90" stroke="#c8b840" stroke-width="0.7"/><rect x="-1.5" y="-1.5" width="6.5" height="6.5" fill="#cfe3f5" stroke="#7aa8d0" stroke-width="0.7"/></g><g transform="translate(16 426)"><path d="M-5 -2c1-3 5-4 9-2l1 3c-2 3-6 4-9 3z" fill="#d9a36a" stroke="#8a5a30" stroke-width="0.6"/><path d="M-5 -3a5 5 0 0 1 8-2" fill="none" stroke="#555" stroke-width="0.8"/><circle cx="-5" cy="-2" r="1.2" fill="#d4a820"/><circle cx="-3" cy="4.5" r="1.2" fill="#d4a820"/></g><g transform="translate(16 445)"><circle cx="0" cy="0.5" r="4.5" fill="#222"/><circle cx="-1.5" cy="-1" r="1.5" fill="#777"/><circle cx="2.2" cy="-5" r="1.4" fill="#f04020"/><circle cx="2.2" cy="-5" r="0.7" fill="#ffd020"/></g><g transform="translate(37.5 101)"><path d="M-4 -4h7M-4 -4v8" stroke="#777" stroke-width="0.9"/><circle cx="-4" cy="-4" r="1.4" fill="#c0305a"/><circle cx="4" cy="-4" r="1.2" fill="#fff" stroke="#333" stroke-width="0.8"/><circle cx="-4" cy="4" r="1.2" fill="#fff" stroke="#333" stroke-width="0.8"/></g><g transform="translate(37.5 119)"><path d="M-4 0h7" stroke="#444" stroke-width="0.9"/><circle cx="-4" cy="0" r="1.4" fill="#c0305a"/><circle cx="4" cy="0" r="1.2" fill="#fff" stroke="#333" stroke-width="0.8"/></g><rect x="30" y="129" width="16" height="1" fill="#a8a8a8"/><rect x="30" y="130" width="16" height="1" fill="#fff"/><g transform="translate(37.5 141)"><path d="M-5 -5l10 10" stroke="#333" stroke-width="0.9"/><path d="M-5 5l2-2M-1 1l2-2M3 -3l2-2" stroke="#333" stroke-width="0.9"/><circle cx="0" cy="0" r="1.4" fill="#c0305a"/></g><g transform="translate(37.5 159)"><path d="M-5 -5q5 7 10 10M-5 5q4-8 10-9" fill="none" stroke="#333" stroke-width="0.9"/><circle cx="0" cy="0" r="1.4" fill="#c0305a"/></g><g transform="translate(37.5 177)"><path d="M-3.5 -3.5l7 7" stroke="#333" stroke-width="0.9"/><circle cx="-3.5" cy="-3.5" r="1.4" fill="#c0305a"/><circle cx="3.5" cy="3.5" r="1.4" fill="#c0305a"/></g><g transform="translate(37.5 195)"><path d="M-5 -3.5h10M0 -3.5v9" stroke="#222" stroke-width="0.9"/><circle cx="0" cy="-3.5" r="1.4" fill="#c0305a"/></g><g transform="translate(37.5 213.5)"><path d="M-5 5l10-10" stroke="#222" stroke-width="0.9"/><circle cx="0" cy="0" r="1.4" fill="#c0305a"/></g><rect x="30" y="224" width="16" height="1" fill="#a8a8a8"/><rect x="30" y="225" width="16" height="1" fill="#fff"/><g transform="translate(37.5 236)"><circle r="4.6" fill="none" stroke="#444" stroke-width="1"/><circle cx="0" cy="0" r="1.3" fill="#c0305a"/></g><g transform="translate(37.5 254)"><circle r="4.6" fill="none" stroke="#777" stroke-width="0.8"/><circle cx="0" cy="-4.6" r="1.2" fill="#c0305a"/><circle cx="0" cy="4.6" r="1.2" fill="#c0305a"/><circle cx="-4.6" cy="0" r="1.2" fill="#c0305a"/><circle cx="4.6" cy="0" r="1.2" fill="#c0305a"/></g><g transform="translate(37.5 272)"><circle cx="-1.5" cy="1.5" r="4" fill="none" stroke="#444" stroke-width="1"/><path d="M-3 -6l8 8" stroke="#c0305a" stroke-width="1.1"/></g><rect x="30" y="282" width="16" height="1" fill="#a8a8a8"/><rect x="30" y="283" width="16" height="1" fill="#fff"/><g transform="translate(37.5 293.5)"><rect x="-5" y="-5" width="10" height="10" fill="#f4f4f4" stroke="#aaa" stroke-width="0.8"/><path d="M-2.5 3l2.5-6 2.5 6M-1.5 1h3" fill="none" stroke="#333" stroke-width="0.8"/><circle cx="-4" cy="4" r="1.3" fill="#c0305a"/></g><g transform="translate(37.5 312)"><path d="M-3.5 3.5l7-7" stroke="#333" stroke-width="0.8" stroke-dasharray="1.5 1"/><circle cx="-3.5" cy="3.5" r="1.4" fill="#c0305a"/><circle cx="3.5" cy="-3.5" r="1.4" fill="#c0305a"/><circle r="1" fill="#2060e0"/></g><g transform="translate(37.5 330)"><path d="M-5 -4l8 8" stroke="#222" stroke-width="1"/><path d="M-2 -6l7 7" stroke="#c0305a" stroke-width="1"/></g><g transform="translate(37.5 348)"><path d="M-5 -2l6 6M-3 3l6-5" stroke="#222" stroke-width="1"/><path d="M0 0v-3.5l4-3" fill="none" stroke="#c0305a" stroke-width="1"/></g><rect x="30" y="359" width="16" height="1" fill="#a8a8a8"/><rect x="30" y="360" width="16" height="1" fill="#fff"/><g transform="translate(37.5 371)"><path d="M-5 3l5-4 5-5M0 -1l5 4" fill="none" stroke="#333" stroke-width="0.9"/><circle cx="0" cy="-1" r="1.4" fill="#c0305a"/></g><g transform="translate(37.5 389)"><path d="M-5 -6v11" stroke="#222" stroke-width="1"/><path d="M-5 -1h9" stroke="#888" stroke-width="0.7"/><circle cx="-2.5" cy="2" r="2" fill="#f06060" stroke="#d02020" stroke-width="0.6"/><circle cx="4.5" cy="-1" r="1.5" fill="#c0305a"/><circle cx="-0.5" cy="-1" r="0.9" fill="#2060e0"/></g><rect x="30" y="399" width="16" height="1" fill="#a8a8a8"/><rect x="30" y="400" width="16" height="1" fill="#fff"/><g transform="translate(37.5 411)"><path d="M-5 -6v11" stroke="#222" stroke-width="1"/><path d="M-5 3h9" stroke="#888" stroke-width="0.7"/><path d="M-3 -1c1-3 3-4.5 5-4s3 1.5 4 1l-1 3c-2 1-5 1-8 0z" fill="#d9a36a" stroke="#8a5a30" stroke-width="0.6"/><circle cx="4.5" cy="3" r="1.5" fill="#c0305a"/><circle cx="-0.5" cy="3" r="0.9" fill="#2060e0"/></g><g transform="translate(59.5 101)"><path d="M-4.5 -4.5l9 9" stroke="#333" stroke-width="1"/><circle cx="-4.5" cy="-4.5" r="1.3" fill="#d4a820" stroke="#7a5a00" stroke-width="0.5"/><circle cx="4.5" cy="4.5" r="1.3" fill="#d4a820" stroke="#7a5a00" stroke-width="0.5"/></g><g transform="translate(59.5 119)"><path d="M-5 -5l10 10" stroke="#222" stroke-width="1"/><path d="M-5.5 -5.5l2.5 .8-1.7 1.7zM5.5 5.5l-2.5-.8 1.7-1.7z" fill="#111"/><circle cx="0" cy="0" r="1.3" fill="#d4a820" stroke="#7a5a00" stroke-width="0.5"/></g><g transform="translate(59.5 137)"><path d="M-5.5 0l2.75-4.8h5.5l2.75 4.8-2.75 4.8h-5.5z" fill="none" stroke="#222" stroke-width="1"/></g><g transform="translate(59.5 155)"><rect x="-4.5" y="-3" width="9" height="6" fill="none" stroke="#222" stroke-width="1"/><circle cx="-4.5" cy="-3" r="1.3" fill="#d4a820" stroke="#7a5a00" stroke-width="0.5"/><circle cx="4.5" cy="3" r="1.3" fill="#d4a820" stroke="#7a5a00" stroke-width="0.5"/></g><g transform="translate(59.5 173)"><path d="M-4.3 0a4.3 4.3 0 0 1 8.6 0" fill="none" stroke="#222" stroke-width="1"/><circle cx="-4.3" cy="0" r="1.3" fill="#d4a820" stroke="#7a5a00" stroke-width="0.5"/><circle cx="4.3" cy="0" r="1.3" fill="#d4a820" stroke="#7a5a00" stroke-width="0.5"/><circle cx="0" cy="4.5" r="1.3" fill="#d4a820" stroke="#7a5a00" stroke-width="0.5"/></g><g transform="translate(59.5 191)"><path d="M-4.5 -4a8 8 0 0 1 8.5 8" fill="none" stroke="#222" stroke-width="1"/><circle cx="-4.5" cy="-4" r="1.3" fill="#d4a820" stroke="#7a5a00" stroke-width="0.5"/><circle cx="0.5" cy="-1.5" r="1.3" fill="#d4a820" stroke="#7a5a00" stroke-width="0.5"/><circle cx="4" cy="4.5" r="1.3" fill="#d4a820" stroke="#7a5a00" stroke-width="0.5"/></g><g transform="translate(59.5 209)"><circle r="5.3" fill="none" stroke="#333" stroke-width="1"/><circle cx="0" cy="-1" r="1.3" fill="#d4a820" stroke="#7a5a00" stroke-width="0.5"/><circle cx="2.5" cy="2.5" r="1.3" fill="#d4a820" stroke="#7a5a00" stroke-width="0.5"/></g><g transform="translate(59.5 227.5)"><ellipse rx="6" ry="3.2" transform="rotate(-35)" fill="none" stroke="#222" stroke-width="1"/><path d="M-1 -1l2 1-2 1z" fill="#222"/><circle cx="-4.5" cy="3.5" r="1.3" fill="#d4a820" stroke="#7a5a00" stroke-width="0.5"/><circle cx="4.5" cy="-3.5" r="1.3" fill="#d4a820" stroke="#7a5a00" stroke-width="0.5"/><circle cx="-1.5" cy="-2.5" r="1.3" fill="#d4a820" stroke="#7a5a00" stroke-width="0.5"/></g><g transform="translate(59.5 245)"><path d="M-4 4a5 4 -35 1 1 7.5 -1" fill="none" stroke="#222" stroke-width="1"/><circle cx="-4" cy="4" r="1.3" fill="#d4a820" stroke="#7a5a00" stroke-width="0.5"/><circle cx="3" cy="4" r="1.3" fill="#d4a820" stroke="#7a5a00" stroke-width="0.5"/><path d="M-1 -1l2 1-2 1z" fill="#222"/></g><g transform="translate(59.5 263)"><circle cx="-4" cy="-3" r="1.3" fill="#d4a820" stroke="#7a5a00" stroke-width="0.5"/><circle cx="2.5" cy="-3.5" r="1.3" fill="#d4a820" stroke="#7a5a00" stroke-width="0.5"/><circle cx="-1" cy="-1" r="1.3" fill="#d4a820" stroke="#7a5a00" stroke-width="0.5"/><circle cx="-4" cy="2" r="1.3" fill="#d4a820" stroke="#7a5a00" stroke-width="0.5"/><circle cx="1" cy="1.5" r="1.3" fill="#d4a820" stroke="#7a5a00" stroke-width="0.5"/><circle cx="4" cy="3" r="1.3" fill="#d4a820" stroke="#7a5a00" stroke-width="0.5"/></g><g transform="translate(59.5 281)"><path d="M-4.5 3.5c0-4 3-4 3.5-2s3 3 3-.5 1-4.5 2.5-4.5" fill="none" stroke="#222" stroke-width="1"/><circle cx="-4.5" cy="3.5" r="1.3" fill="#d4a820" stroke="#7a5a00" stroke-width="0.5"/><circle cx="4.5" cy="-4" r="1.3" fill="#d4a820" stroke="#7a5a00" stroke-width="0.5"/></g><g transform="translate(59.5 299.5)"><rect x="-5.5" y="-5.0" width="1.5" height="1.5" fill="#7a7a7a"/><rect x="-5.5" y="-3.5" width="1.5" height="1.5" fill="#c8c8c8"/><rect x="-5.5" y="-2.0" width="1.5" height="1.5" fill="#7a7a7a"/><rect x="-5.5" y="-0.5" width="1.5" height="1.5" fill="#c8c8c8"/><rect x="-5.5" y="1.0" width="1.5" height="1.5" fill="#7a7a7a"/><rect x="-5.5" y="2.5" width="1.5" height="1.5" fill="#c8c8c8"/><rect x="-5.5" y="4.0" width="1.5" height="1.5" fill="#7a7a7a"/><rect x="-4.0" y="-5.0" width="1.5" height="1.5" fill="#c8c8c8"/><rect x="-4.0" y="-3.5" width="1.5" height="1.5" fill="#7a7a7a"/><rect x="-4.0" y="-2.0" width="1.5" height="1.5" fill="#c8c8c8"/><rect x="-4.0" y="-0.5" width="1.5" height="1.5" fill="#7a7a7a"/><rect x="-4.0" y="1.0" width="1.5" height="1.5" fill="#c8c8c8"/><rect x="-4.0" y="2.5" width="1.5" height="1.5" fill="#7a7a7a"/><rect x="-4.0" y="4.0" width="1.5" height="1.5" fill="#c8c8c8"/><rect x="-2.5" y="-5.0" width="1.5" height="1.5" fill="#7a7a7a"/><rect x="-2.5" y="-3.5" width="1.5" height="1.5" fill="#c8c8c8"/><rect x="-2.5" y="-2.0" width="1.5" height="1.5" fill="#7a7a7a"/><rect x="-2.5" y="-0.5" width="1.5" height="1.5" fill="#c8c8c8"/><rect x="-2.5" y="1.0" width="1.5" height="1.5" fill="#7a7a7a"/><rect x="-2.5" y="2.5" width="1.5" height="1.5" fill="#c8c8c8"/><rect x="-2.5" y="4.0" width="1.5" height="1.5" fill="#7a7a7a"/><rect x="-1.0" y="-5.0" width="1.5" height="1.5" fill="#c8c8c8"/><rect x="-1.0" y="-3.5" width="1.5" height="1.5" fill="#7a7a7a"/><rect x="-1.0" y="-2.0" width="1.5" height="1.5" fill="#c8c8c8"/><rect x="-1.0" y="-0.5" width="1.5" height="1.5" fill="#7a7a7a"/><rect x="-1.0" y="1.0" width="1.5" height="1.5" fill="#c8c8c8"/><rect x="-1.0" y="2.5" width="1.5" height="1.5" fill="#7a7a7a"/><rect x="-1.0" y="4.0" width="1.5" height="1.5" fill="#c8c8c8"/><rect x="0.5" y="-5.0" width="1.5" height="1.5" fill="#7a7a7a"/><rect x="0.5" y="-3.5" width="1.5" height="1.5" fill="#c8c8c8"/><rect x="0.5" y="-2.0" width="1.5" height="1.5" fill="#7a7a7a"/><rect x="0.5" y="-0.5" width="1.5" height="1.5" fill="#c8c8c8"/><rect x="0.5" y="1.0" width="1.5" height="1.5" fill="#7a7a7a"/><rect x="0.5" y="2.5" width="1.5" height="1.5" fill="#c8c8c8"/><rect x="0.5" y="4.0" width="1.5" height="1.5" fill="#7a7a7a"/><rect x="2.0" y="-5.0" width="1.5" height="1.5" fill="#c8c8c8"/><rect x="2.0" y="-3.5" width="1.5" height="1.5" fill="#7a7a7a"/><rect x="2.0" y="-2.0" width="1.5" height="1.5" fill="#c8c8c8"/><rect x="2.0" y="-0.5" width="1.5" height="1.5" fill="#7a7a7a"/><rect x="2.0" y="1.0" width="1.5" height="1.5" fill="#c8c8c8"/><rect x="2.0" y="2.5" width="1.5" height="1.5" fill="#7a7a7a"/><rect x="2.0" y="4.0" width="1.5" height="1.5" fill="#c8c8c8"/><rect x="3.5" y="-5.0" width="1.5" height="1.5" fill="#7a7a7a"/><rect x="3.5" y="-3.5" width="1.5" height="1.5" fill="#c8c8c8"/><rect x="3.5" y="-2.0" width="1.5" height="1.5" fill="#7a7a7a"/><rect x="3.5" y="-0.5" width="1.5" height="1.5" fill="#c8c8c8"/><rect x="3.5" y="1.0" width="1.5" height="1.5" fill="#7a7a7a"/><rect x="3.5" y="2.5" width="1.5" height="1.5" fill="#c8c8c8"/><rect x="3.5" y="4.0" width="1.5" height="1.5" fill="#7a7a7a"/></g><g transform="translate(59.5 317.5)"><rect x="-5" y="-5" width="9" height="10" fill="#f4f4f4" stroke="#aaa" stroke-width="0.8"/><path d="M-3 2l2.3-6 2.3 6M-2 0h2.6" fill="none" stroke="#333" stroke-width="0.8"/><circle cx="2.5" cy="2.5" r="3" fill="#22a033"/><path d="M2.5 0.8v3.4M1 2.8l1.5 1.5 1.5-1.5" fill="none" stroke="#fff" stroke-width="0.9"/></g><g transform="translate(59.5 335)"><path d="M-5 -3q0-2 2-2h8v6q0 3-3 4h-7z" fill="#f0d040" stroke="#8a7020" stroke-width="0.8"/><rect x="-2.5" y="-2" width="5" height="3" fill="none" stroke="#555" stroke-width="0.7"/></g><g transform="translate(59.5 353)"><rect x="-5" y="-5" width="10" height="10" fill="#f0f0f0" stroke="#aaa" stroke-width="0.8"/><path d="M-3.5 -1l1.2-2.5 1.2 2.5z" fill="#222"/></g><g transform="translate(59.5 371)"><rect x="-5" y="-2" width="10" height="4.5" fill="#f4f4f4" stroke="#aaa" stroke-width="0.8"/><path d="M-3.5 1.2l1.2-2.5 1.2 2.5z" fill="#222"/></g><g transform="translate(59.5 389)"><rect x="-5" y="-4.5" width="10" height="9" fill="none" stroke="#444" stroke-width="0.9" stroke-dasharray="2 1"/><path d="M-3.5 4.5l1-3 6-6 2 2-6 6z" fill="#f0c030" stroke="#555" stroke-width="0.6"/></g><g transform="translate(59.5 407.5)"><path d="M-4.5 -4.5q1.5 -1 3 0q1.5 -1 3 0q1.5 -1 3 0q1 1.5 0 3q1 1.5 0 3q1 1.5 0 3q-1.5 1-3 0q-1.5 1-3 0q-1.5 1-3 0q-1-1.5 0-3q-1-1.5 0-3q-1-1.5 0-3z" fill="none" stroke="#333" stroke-width="0.9"/></g><g transform="translate(59.5 426)"><path d="M-1.5 -5q1.5-1 3 0q2.5 0 3.5 3.5q1 1.5 0 3q-1 3.5-3.5 3.5q-1.5 1-3 0q-2.5 0-3.5-3.5q-1-1.5 0-3q1-3.5 3.5-3.5z" fill="none" stroke="#333" stroke-width="0.9"/></g><g transform="translate(59.5 444.5)"><path d="M-1 -5.5q2-.5 2.5 2.5q3.5-1 3.5 1.5q0 2-2.5 2.5q1 3.5-1.5 4q-2 .5-2.5-2q-3 2-4-.5q-.5-2 2-3q-2-2-.5-3.5q1.5-1 3 .5z" fill="none" stroke="#333" stroke-width="0.9"/></g><path d="M200.1 162.5 A38.5 38.5 0 1 0 191.2 194" fill="none" stroke="#d0d0d0" stroke-width="1"/><path d="M202.6 133.5 C202.8 136.2 203.1 142.8 203.6 150.0 C204.1 157.2 204.8 168.9 205.4 176.7 C206.1 184.5 206.7 191.8 207.5 197.0 C208.3 202.2 209.2 207.0 210.0 208.2 C210.8 209.4 211.5 206.7 212.5 204.0 C213.5 201.3 214.6 196.8 216.0 192.0 C217.4 187.2 219.4 180.0 221.0 175.0 C222.6 170.0 224.5 164.5 225.5 162.0 C226.5 159.5 226.5 159.8 227.1 160.0 C227.7 160.2 228.2 159.7 229.0 163.0 C229.8 166.3 231.0 173.8 232.0 180.0 C233.0 186.2 234.2 195.0 235.0 200.0 C235.8 205.0 236.1 209.0 236.8 210.2 C237.5 211.4 238.0 210.0 239.0 207.0 C240.0 204.0 241.2 199.3 243.0 192.0 C244.8 184.7 248.2 170.7 249.5 163.4 C250.8 156.1 250.6 152.7 251.0 148.0 C251.4 143.3 252.0 137.3 252.2 135.2" fill="none" stroke="#d0d0d0" stroke-width="1"/><path d="M300.0 136.7 C299.6 136.9 297.6 137.9 297.4 137.8 C297.2 137.7 299.9 136.7 299.0 136.2 C298.1 135.7 296.0 135.1 292.3 134.7 C288.6 134.3 281.7 133.5 276.9 133.7 C272.1 133.9 267.0 134.6 263.5 135.7 C260.0 136.8 257.7 138.3 255.8 140.3 C253.9 142.3 252.8 144.9 252.2 147.5 C251.6 150.1 251.5 153.1 252.2 155.8 C252.9 158.6 254.4 161.6 256.3 164.0 C258.2 166.4 260.9 169.5 263.5 170.4 C266.1 171.3 268.9 169.4 271.7 169.2 C274.4 169.0 277.4 168.9 280.0 169.0 C282.6 169.1 285.1 169.1 287.2 169.7 C289.3 170.3 292.8 171.9 292.8 172.8 C292.8 173.7 290.2 174.9 287.2 175.2 C284.2 175.5 278.4 175.4 274.8 174.8 C271.2 174.2 268.2 171.8 265.5 171.7 C262.8 171.6 260.1 173.1 258.3 174.3 C256.5 175.5 255.5 177.0 254.5 179.0 C253.5 181.0 252.5 183.7 252.2 186.5 C251.9 189.3 251.8 192.6 252.7 195.8 C253.5 199.1 255.2 203.1 257.3 206.0 C259.4 208.9 263.3 211.8 265.5 213.3 C267.7 214.8 268.3 215.3 270.7 215.1 C273.1 214.9 276.8 213.5 280.0 212.2 C283.2 210.9 286.7 209.2 290.0 207.5 C293.3 205.8 298.3 202.9 300.0 202.0" fill="none" stroke="#d0d0d0" stroke-width="1"/><path d="M320.7 215.0 C320.3 213.3 319.2 209.2 318.5 205.0 C317.8 200.8 317.0 194.5 316.5 190.0 C316.0 185.5 315.5 182.2 315.3 178.0 C315.1 173.8 315.2 168.8 315.5 165.0 C315.8 161.2 315.8 159.3 316.9 155.0 C318.0 150.7 319.6 143.4 322.0 139.0 C324.4 134.6 326.8 131.4 331.0 128.5 C335.2 125.5 342.0 122.3 347.5 121.3 C353.0 120.3 358.5 121.2 364.0 122.5 C369.5 123.8 376.3 126.8 380.5 129.2 C384.7 131.6 387.2 134.4 389.0 137.0 C390.8 139.6 391.3 142.3 391.5 145.0 C391.7 147.7 391.1 150.2 390.0 153.0 C388.9 155.8 387.8 158.5 385.0 161.5 C382.2 164.5 376.8 168.9 373.0 171.2 C369.2 173.5 365.2 174.4 362.0 175.4 C358.8 176.4 356.5 176.9 353.7 177.0 C350.9 177.1 348.1 176.3 345.3 175.8 C342.5 175.3 339.8 174.7 337.0 174.2 C334.2 173.7 330.8 173.0 328.7 172.9 C326.6 172.8 325.3 173.1 324.5 173.8 C323.7 174.4 323.6 175.9 323.7 176.7 C323.8 177.5 323.1 176.8 325.3 178.8 C327.5 180.7 333.1 184.9 337.0 188.3 C340.9 191.7 344.5 195.8 348.6 199.0 C352.7 202.2 357.3 204.9 361.6 207.6 C365.9 210.3 371.1 213.7 374.5 215.4 C377.9 217.1 380.5 218.0 382.3 218.0 C384.1 218.0 385.2 216.8 385.3 215.4 C385.4 214.0 384.7 211.9 383.2 209.4 C381.7 206.9 379.2 203.9 376.3 200.7 C373.4 197.5 369.6 193.8 365.9 190.4 C362.1 187.0 356.4 182.2 353.8 180.0 C351.2 177.8 351.4 178.4 350.0 177.5 C348.6 176.6 347.1 175.6 345.3 174.6 C343.6 173.6 341.6 172.4 339.5 171.7 C337.4 171.0 334.9 170.6 332.8 170.4 C330.7 170.2 328.6 170.5 327.0 170.7 C325.4 170.9 324.1 171.1 323.2 171.7 C322.4 172.3 322.0 173.1 322.0 174.2 C322.0 175.3 323.2 175.7 323.2 178.3 C323.3 180.9 322.8 186.4 322.5 190.0 C322.2 193.6 321.9 195.8 321.6 200.0 C321.3 204.2 320.9 212.5 320.7 215.0" fill="none" stroke="#d0d0d0" stroke-width="1"/><g stroke="#e8e8e8" stroke-width="1" fill="none"><path d="M173.5 318.5V285.5M170.8 289.5l2.7-4 2.7 4"/><path d="M176 319.5H207.5M203.5 316.5l4 3-4 3"/><rect x="170.5" y="316.5" width="5" height="5"/><path d="M173 316.5v5M170.5 319h5"/><path d="M170.5 276.5l2.7 3.5 2.7-3.5M173.2 280v3.5"/><path d="M209 315.5l5.5 7M214.5 315.5l-5.5 7"/></g><path d="M432.5 110.5h3.5v4.5h-3.5z M436 115v6" fill="none" stroke="#e0e0e0" stroke-width="1"/><path d="M578.5 89.5h4v3.5" fill="none" stroke="#222" stroke-width="1"/><rect x="576" y="91.5" width="4.5" height="4" fill="none" stroke="#222" stroke-width="1"/><path d="M576 92h4.5M578.5 90h4" stroke="#222" stroke-width="1.5"/><path d="M585.5 89.5 L590.5 94.5 M590.5 89.5 L585.5 94.5" stroke="#222" stroke-width="1.4"/><path d="M498.5 113.8l2.2 2.2 2.2-2.2" fill="none" stroke="#333" stroke-width="1.2"/><rect x="513.5" y="110.5" width="8.5" height="9" fill="#fff" stroke="#111" stroke-width="1" stroke-dasharray="1 1"/><circle cx="517.8" cy="115" r="3.2" fill="#70d080"/><circle cx="517.8" cy="114.5" r="1.8" fill="#8ab8f0"/><path d="M534.5 111.5h4l2 2v4h-6z" fill="#ddd" stroke="#666" stroke-width="0.8" stroke-dasharray="1.2 0.6"/><path d="M538.5 113.5l4 4-1.7.4 1.2 2.2-1 .5-1.2-2.2-1.3 1.2z" fill="#fff" stroke="#333" stroke-width="0.6"/><rect x="553.5" y="111" width="7.5" height="7" rx="1.5" fill="#606060" stroke="#333" stroke-width="0.7"/><circle cx="556" cy="113.5" r="1.2" fill="#ddd"/><path d="M558 114l4 4-1.7.4 1.2 2.2-1 .5-1.2-2.2-1.3 1.2z" fill="#fff" stroke="#222" stroke-width="0.6"/><rect x="574" y="111" width="7" height="6.5" rx="1.5" fill="#707070" stroke="#333" stroke-width="0.7"/><circle cx="576.5" cy="113.5" r="1.2" fill="#ddd"/><path d="M581 112.5l-2.8 4h2.2l-2.4 4.5 5-5.5h-2.2l1.8-3z" fill="#f0c020" stroke="#a07000" stroke-width="0.4"/><path d="M578.2 135l2.3-2.3 2.3 2.3" fill="none" stroke="#333" stroke-width="1.2"/><path d="M578.2 364.5l2.3 2.3 2.3-2.3" fill="none" stroke="#333" stroke-width="1.2"/><path d="M552.5 197l2.3 2.3 2.3-2.3" fill="none" stroke="#333" stroke-width="1.2"/><path d="M552.5 211l2.3 2.3 2.3-2.3" fill="none" stroke="#333" stroke-width="1.2"/><path d="M552.5 225l2.3 2.3 2.3-2.3" fill="none" stroke="#333" stroke-width="1.2"/><rect x="485" y="226" width="21" height="1" fill="#333"/><path d="M552.5 238.5l2.3 2.3 2.3-2.3" fill="none" stroke="#333" stroke-width="1.2"/><circle cx="489.5" cy="239.8" r="3.3" fill="#fff" stroke="#222" stroke-width="0.9"/><circle cx="467.5" cy="155.5" r="5.2" fill="#2a7fd0"/><path d="M463 152.5q2-2.5 5-2t4 2.5q-1 2.5-3.5 2t-2.5 2.5q-2 0-3-2z" fill="#3cb04a"/><circle cx="469" cy="159" r="2.2" fill="#333"/><circle cx="472" cy="159" r="2.2" fill="#333"/><circle cx="469" cy="159" r="1" fill="#bbb"/><circle cx="472" cy="159" r="1" fill="#bbb"/><rect x="462" y="164.5" width="11.5" height="2" fill="#222"/><rect x="462" y="167.8" width="2" height="2" fill="#222"/><rect x="465" y="167.8" width="2" height="2" fill="#222"/><rect x="468" y="167.8" width="2" height="2" fill="#222"/><rect x="471" y="167.8" width="2" height="2" fill="#222"/><rect x="462" y="171" width="2" height="2.5" fill="#222"/><rect x="465" y="171" width="2" height="2.5" fill="#222"/><rect x="468" y="171" width="2" height="2.5" fill="#222"/><rect x="471" y="171" width="2" height="2.5" fill="#222"/><rect x="462" y="169.8" width="11.5" height="1.2" fill="#555"/><rect x="461.5" y="176.5" width="3" height="3.5" fill="#8c8c8c"/><rect x="461.5" y="180.0" width="3" height="3.5" fill="#e4e4e4"/><rect x="461.5" y="183.5" width="3" height="3.5" fill="#8c8c8c"/><rect x="461.5" y="187.0" width="3" height="3.5" fill="#e4e4e4"/><rect x="464.5" y="176.5" width="3" height="3.5" fill="#e4e4e4"/><rect x="464.5" y="180.0" width="3" height="3.5" fill="#8c8c8c"/><rect x="464.5" y="183.5" width="3" height="3.5" fill="#e4e4e4"/><rect x="464.5" y="187.0" width="3" height="3.5" fill="#8c8c8c"/><rect x="467.5" y="176.5" width="3" height="3.5" fill="#8c8c8c"/><rect x="467.5" y="180.0" width="3" height="3.5" fill="#e4e4e4"/><rect x="467.5" y="183.5" width="3" height="3.5" fill="#8c8c8c"/><rect x="467.5" y="187.0" width="3" height="3.5" fill="#e4e4e4"/><rect x="470.5" y="176.5" width="3" height="3.5" fill="#e4e4e4"/><rect x="470.5" y="180.0" width="3" height="3.5" fill="#8c8c8c"/><rect x="470.5" y="183.5" width="3" height="3.5" fill="#e4e4e4"/><rect x="470.5" y="187.0" width="3" height="3.5" fill="#8c8c8c"/><path d="M461.5 197.5l3-3.5h9v4.5l-3 3h-9z" fill="#c0b060" stroke="#807030" stroke-width="0.6"/><path d="M461.5 197.5h9l3-3.5M470.5 197.5v4" fill="none" stroke="#e0d890" stroke-width="0.7"/><rect x="461.5" y="206.5" width="12" height="11" fill="#222"/><rect x="462.5" y="209" width="1.5" height="2" fill="#fff"/><rect x="465.2" y="209" width="1.5" height="2" fill="#fff"/><rect x="467.9" y="209" width="1.5" height="2" fill="#fff"/><rect x="470.6" y="209" width="1.5" height="2" fill="#fff"/><rect x="463.8" y="212.5" width="1.2" height="3.5" fill="#fff"/><rect x="466.5" y="212.5" width="1.2" height="3.5" fill="#fff"/><rect x="469.2" y="212.5" width="1.2" height="3.5" fill="#fff"/><rect x="471.90000000000003" y="212.5" width="1.2" height="3.5" fill="#fff"/><rect x="461.5" y="219.5" width="12" height="1.6" fill="#222"/><rect x="461.5" y="222.8" width="12" height="2" fill="#222"/><rect x="461.5" y="226.5" width="12" height="2.2" fill="#222"/><rect x="461.5" y="230" width="12" height="1.6" fill="#222"/><path d="M462.5 238a4 4 0 0 1 5-4" fill="none" stroke="#555" stroke-width="1.2"/><circle cx="465.5" cy="241" r="3" fill="#2a6ac0"/><path d="M466.5 243l6.5-8.5" stroke="#e09020" stroke-width="2"/><path d="M464 238.5l3 3" stroke="#fff" stroke-width="0.8"/><path d="M552.5 280.5l2.3 2.3 2.3-2.3" fill="none" stroke="#333" stroke-width="1.2"/><path d="M552.5 294l2.3 2.3 2.3-2.3" fill="none" stroke="#b8b8b8" stroke-width="1.2"/><rect x="462.5" y="276.5" width="9.5" height="9.5" fill="#fff" stroke="#333" stroke-width="0.8"/><path d="M463.5 283l2-1.5 2 .5" stroke="#444" stroke-width="0.8" fill="none"/><path d="M466 284l6-7" stroke="#d09020" stroke-width="1.6"/><rect x="462.5" y="290" width="2" height="10" fill="#e03030"/><rect x="465" y="290" width="2" height="10" fill="#30a040"/><rect x="467.5" y="290" width="2" height="10" fill="#3060d0"/><path d="M469.5 300l3-10" stroke="#3060d0" stroke-width="1.2" stroke-dasharray="1 1"/><rect x="462.5" y="303.5" width="2" height="10" fill="#e03030"/><path d="M465 313.5l7-8.5v8.5z" fill="#222"/><path d="M465 303.5l2.5 0v4" stroke="#30a040" stroke-width="1.2" fill="none"/><path d="M463.5 345.5h8M463.5 355.5h8" stroke="#222" stroke-width="1"/><path d="M467.5 347v7" stroke="#2a70c0" stroke-width="1"/><path d="M467.5 346.5l-1.8 2h3.6zM467.5 354.5l-1.8-2h3.6z" fill="#2a70c0"/><circle cx="467" cy="363" r="4.5" fill="#fff" stroke="#444" stroke-width="1"/><circle cx="467" cy="363" r="1.2" fill="#d4a820"/><path d="M469.5 366l2.5 2.5M472 366l-2.5 2.5" stroke="#222" stroke-width="0.8"/><path d="M463 372.5a4.5 2.5 0 0 1 9 0" fill="none" stroke="#666" stroke-width="1"/><path d="M75 381H109M117.5 381H146.5M155 381H184.5" stroke="#404040" stroke-width="1.3"/><path d="M578.5 387.5h4v3.5" fill="none" stroke="#222" stroke-width="1"/><rect x="576" y="389.5" width="4.5" height="4" fill="none" stroke="#222" stroke-width="1"/><path d="M576 390h4.5M578.5 388h4" stroke="#222" stroke-width="1.5"/><path d="M586 387.5 L591 392.5 M591 387.5 L586 392.5" stroke="#222" stroke-width="1.4"/><path d="M585.3 406l2.3-2.3 2.3 2.3" fill="none" stroke="#333" stroke-width="1.2"/><path d="M585.3 442.5l2.3 2.3 2.3-2.3" fill="none" stroke="#333" stroke-width="1.2"/><rect x="591" y="469" width="1" height="1" fill="#9a9a9a"/><rect x="589" y="471" width="1" height="1" fill="#9a9a9a"/><rect x="591" y="471" width="1" height="1" fill="#9a9a9a"/><rect x="587" y="473" width="1" height="1" fill="#9a9a9a"/><rect x="589" y="473" width="1" height="1" fill="#9a9a9a"/><rect x="591" y="473" width="1" height="1" fill="#9a9a9a"/><rect x="585" y="475" width="1" height="1" fill="#9a9a9a"/><rect x="587" y="475" width="1" height="1" fill="#9a9a9a"/><rect x="589" y="475" width="1" height="1" fill="#9a9a9a"/><rect x="591" y="475" width="1" height="1" fill="#9a9a9a"/></svg></body></html>
